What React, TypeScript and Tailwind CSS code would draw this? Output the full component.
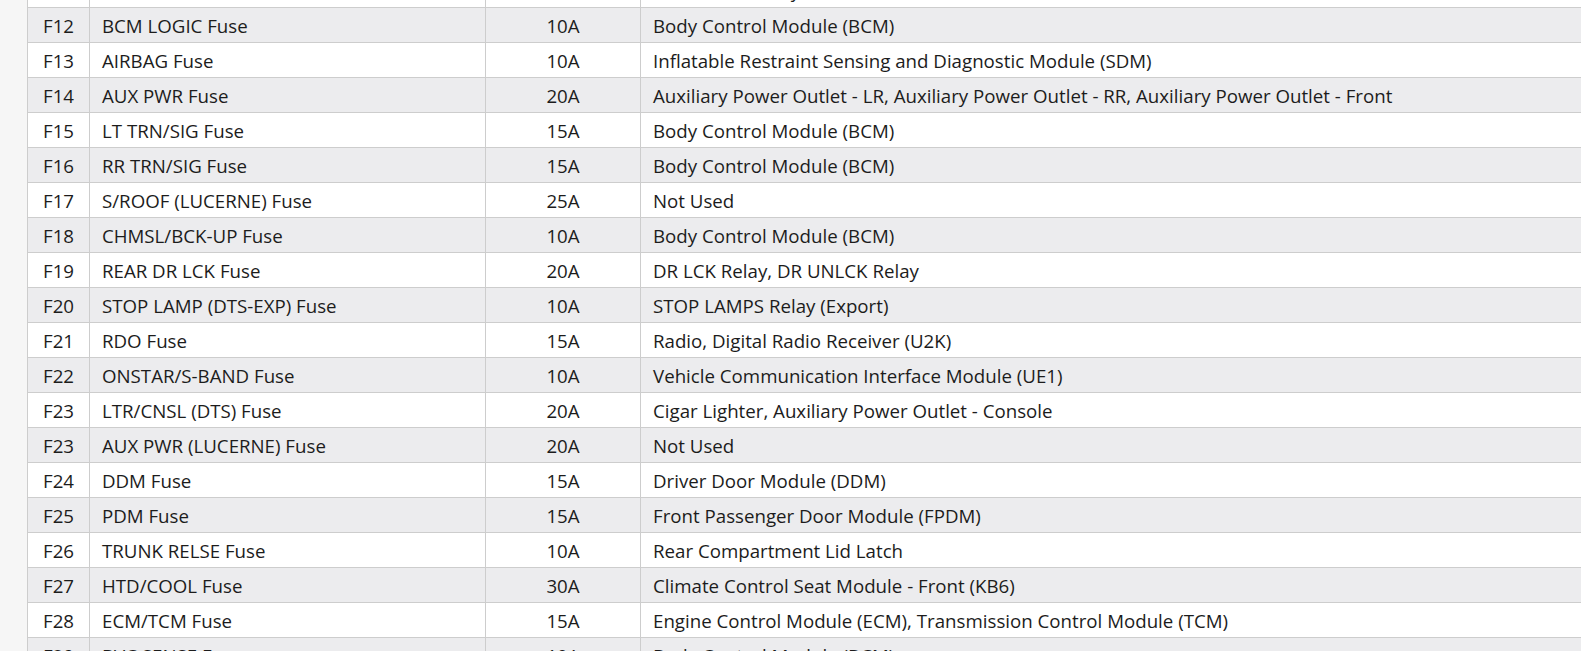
import React from 'react';

type Row = { id: string; name: string; amps: string; usage: string };

const rows: Row[] = [
  { id: 'F11', name: 'HTD MIRROR Fuse', amps: '10A', usage: 'LR Sunroof Relay' },
  { id: 'F12', name: 'BCM LOGIC Fuse', amps: '10A', usage: 'Body Control Module (BCM)' },
  { id: 'F13', name: 'AIRBAG Fuse', amps: '10A', usage: 'Inflatable Restraint Sensing and Diagnostic Module (SDM)' },
  { id: 'F14', name: 'AUX PWR Fuse', amps: '20A', usage: 'Auxiliary Power Outlet - LR, Auxiliary Power Outlet - RR, Auxiliary Power Outlet - Front' },
  { id: 'F15', name: 'LT TRN/SIG Fuse', amps: '15A', usage: 'Body Control Module (BCM)' },
  { id: 'F16', name: 'RR TRN/SIG Fuse', amps: '15A', usage: 'Body Control Module (BCM)' },
  { id: 'F17', name: 'S/ROOF (LUCERNE) Fuse', amps: '25A', usage: 'Not Used' },
  { id: 'F18', name: 'CHMSL/BCK-UP Fuse', amps: '10A', usage: 'Body Control Module (BCM)' },
  { id: 'F19', name: 'REAR DR LCK Fuse', amps: '20A', usage: 'DR LCK Relay, DR UNLCK Relay' },
  { id: 'F20', name: 'STOP LAMP (DTS-EXP) Fuse', amps: '10A', usage: 'STOP LAMPS Relay (Export)' },
  { id: 'F21', name: 'RDO Fuse', amps: '15A', usage: 'Radio, Digital Radio Receiver (U2K)' },
  { id: 'F22', name: 'ONSTAR/S-BAND Fuse', amps: '10A', usage: 'Vehicle Communication Interface Module (UE1)' },
  { id: 'F23', name: 'LTR/CNSL (DTS) Fuse', amps: '20A', usage: 'Cigar Lighter, Auxiliary Power Outlet - Console' },
  { id: 'F23', name: 'AUX PWR (LUCERNE) Fuse', amps: '20A', usage: 'Not Used' },
  { id: 'F24', name: 'DDM Fuse', amps: '15A', usage: 'Driver Door Module (DDM)' },
  { id: 'F25', name: 'PDM Fuse', amps: '15A', usage: 'Front Passenger Door Module (FPDM)' },
  { id: 'F26', name: 'TRUNK RELSE Fuse', amps: '10A', usage: 'Rear Compartment Lid Latch' },
  { id: 'F27', name: 'HTD/COOL Fuse', amps: '30A', usage: 'Climate Control Seat Module - Front (KB6)' },
  { id: 'F28', name: 'ECM/TCM Fuse', amps: '15A', usage: 'Engine Control Module (ECM), Transmission Control Module (TCM)' },
  { id: 'F29', name: 'BVC SENSE Fuse', amps: '10A', usage: 'Body Control Module (BCM)' },
];

export default function App() {
  return (
    <div className="flex h-[651px] w-full overflow-hidden bg-[#f6f6f6] font-['Open_Sans',sans-serif] text-[18.7px] text-[#1c1c1c]">
      <div className="w-[27px] shrink-0" />
      <div className="-mt-[27px] flex-1 border-l border-[#cdcdcd] bg-white">
        {rows.map((r, i) => (
          <div
            key={i}
            className={`grid h-[35px] grid-cols-[62px_396px_155px_1fr] items-center border-b border-[#cdcdcd] ${
              i % 2 === 1 ? 'bg-[#ececee]' : 'bg-white'
            }`}
          >
            <div className="flex h-full items-center justify-center border-r border-[#cdcdcd] pt-[2px]">{r.id}</div>
            <div className="flex h-full items-center border-r border-[#cdcdcd] px-3 pt-[2px]">{r.name}</div>
            <div className="flex h-full items-center justify-center border-r border-[#cdcdcd] pt-[2px]">{r.amps}</div>
            <div className="flex h-full items-center whitespace-nowrap px-3 pt-[2px]">{r.usage}</div>
          </div>
        ))}
      </div>
    </div>
  );
}
